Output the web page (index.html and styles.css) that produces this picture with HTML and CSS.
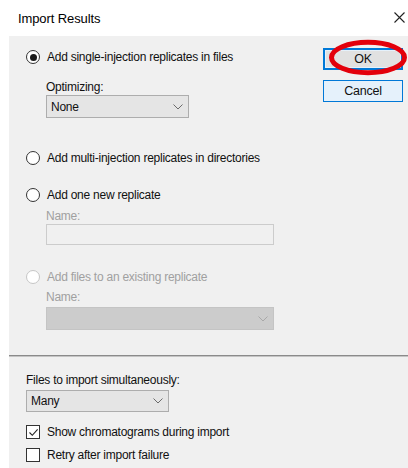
FILE: index.html
```html
<!DOCTYPE html>
<html lang="en">
<head>
<meta charset="utf-8">
<title>Import Results</title>
<link rel="stylesheet" href="styles.css">
</head>
<body>
<div class="dialog">
  <header class="titlebar">
    <span class="title">Import Results</span>
    <svg class="close" width="11" height="11" viewBox="0 0 11 11" aria-label="Close">
      <path d="M0.5 0.5 L10.5 10.5 M10.5 0.5 L0.5 10.5" stroke="#222" stroke-width="1.1" fill="none"/>
    </svg>
  </header>

  <main class="panel">
    <section class="top">
      <div class="options">
        <label class="radio-row r1"><span class="radio checked"></span>Add single-injection replicates in files</label>
        <div class="caption c-opt">Optimizing:</div>
        <div class="combo w-short"><span>None</span>
          <svg class="chev" width="10" height="6" viewBox="0 0 10 6"><path d="M0.5 0.5 L5 5 L9.5 0.5" fill="none" stroke="#6b6b6b" stroke-width="1"/></svg>
        </div>

        <label class="radio-row r2"><span class="radio"></span>Add multi-injection replicates in directories</label>

        <label class="radio-row r3"><span class="radio"></span>Add one new replicate</label>
        <div class="caption disabled c-name1">Name:</div>
        <div class="textbox"></div>

        <label class="radio-row r4 disabled"><span class="radio off"></span>Add files to an existing replicate</label>
        <div class="caption disabled c-name2">Name:</div>
        <div class="combo combo-off w-long">
          <svg class="chev" width="10" height="6" viewBox="0 0 10 6"><path d="M0.5 0.5 L5 5 L9.5 0.5" fill="none" stroke="#a8a8a8" stroke-width="1"/></svg>
        </div>
      </div>

      <div class="buttons">
        <button class="btn btn-default">OK</button>
        <button class="btn btn-hover">Cancel</button>
        <svg class="mark" width="80" height="36" viewBox="0 0 80 36">
          <ellipse cx="39" cy="17.5" rx="36.5" ry="15.2" fill="none" stroke="#e3000b" stroke-width="5"/>
        </svg>
      </div>
    </section>

    <div class="separator"></div>

    <section class="bottom">
      <div class="caption c-files">Files to import simultaneously:</div>
      <div class="combo w-short"><span>Many</span>
        <svg class="chev" width="10" height="6" viewBox="0 0 10 6"><path d="M0.5 0.5 L5 5 L9.5 0.5" fill="none" stroke="#6b6b6b" stroke-width="1"/></svg>
      </div>
      <label class="check-row k1"><span class="check">
        <svg width="11" height="11" viewBox="0 0 11 11"><path d="M1.5 5.5 L4.3 8.3 L9.6 2.3" fill="none" stroke="#222" stroke-width="1.1"/></svg>
      </span>Show chromatograms during import</label>
      <label class="check-row k2"><span class="check"></span>Retry after import failure</label>
    </section>
  </main>
</div>
</body>
</html>
```

FILE: styles.css
```css
* {
  box-sizing: border-box;
}

html, body {
  margin: 0;
  padding: 0;
  background: #ffffff;
}

body {
  width: 408px;
  height: 468px;
  overflow: hidden;
  font-family: "Liberation Sans", Arial, sans-serif;
  font-size: 12px;
  letter-spacing: -0.25px;
  color: #111111;
}

.dialog {
  display: flex;
  flex-direction: column;
  height: 100%;
}

/* window caption */
.titlebar {
  height: 36px;
  flex: none;
  display: flex;
  align-items: center;
  justify-content: space-between;
  padding: 0 3px 0 18px;
  background: #ffffff;
}

.title {
  font-size: 13px;
  letter-spacing: -0.1px;
  color: #000000;
  line-height: 16px;
  margin-top: 2px;
}

.close {
  display: block;
  margin-top: -1px;
}

/* client area */
.panel {
  flex: 1;
  margin-left: 9px;
  background: #f0f0f0;
  display: flex;
  flex-direction: column;
}

.top {
  display: flex;
  justify-content: space-between;
  align-items: flex-start;
}

.options {
  display: flex;
  flex-direction: column;
  align-items: flex-start;
  padding: 13px 0 25px 17px;
}

.radio-row,
.check-row {
  display: flex;
  align-items: center;
  height: 16px;
  line-height: 16px;
  white-space: nowrap;
}

.radio {
  width: 14px;
  height: 14px;
  border: 1px solid #333333;
  border-radius: 50%;
  background: #ffffff;
  margin-right: 7px;
  flex: none;
  position: relative;
}

.radio.checked::after {
  content: "";
  position: absolute;
  left: 2.5px;
  top: 2.5px;
  width: 7px;
  height: 7px;
  border-radius: 50%;
  background: #1a1a1a;
}

.radio.off {
  border-color: #c6c6c6;
}

.disabled {
  color: #a0a0a0;
}

.r2 { margin-top: 32px; }
.r3 { margin-top: 21px; }
.r4 { margin-top: 24px; }

.caption {
  height: 14px;
  line-height: 14px;
  white-space: nowrap;
}

.options .caption {
  margin-left: 20px;
}

.c-opt { margin-top: 15px; }
.c-name1 { margin-top: 6px; }
.c-name2 { margin-top: 5px; }

/* drop-down lists */
.combo {
  height: 23px;
  display: flex;
  align-items: center;
  justify-content: space-between;
  padding: 0 5px 0 4px;
  background: #e5e5e5;
  border: 1px solid #adadad;
  margin-top: 1px;
}

.options .combo,
.options .textbox {
  margin-left: 20px;
}

.combo span {
  line-height: 16px;
}

.chev {
  display: block;
  margin-left: auto;
}

.w-short { width: 143px; }
.w-long { width: 228px; }

.combo-off {
  background: #cccccc;
  border-color: #c4c4c4;
  margin-top: 3px;
}

.textbox {
  width: 228px;
  height: 21px;
  margin-top: 1px;
  background: #f0f0f0;
  border: 1px solid #cccccc;
}

/* command buttons */
.buttons {
  position: relative;
  display: flex;
  flex-direction: column;
  gap: 10px;
  padding-top: 12px;
  margin-right: 5px;
}

.btn {
  width: 80px;
  height: 22px;
  font-family: inherit;
  font-size: 12.5px;
  letter-spacing: -0.25px;
  color: #111111;
  padding: 0;
  border: 1px solid #0078d7;
  background: #e5f1fb;
}

.btn-default {
  border-width: 2px;
  background: #e1e1e1;
  box-shadow: inset 0 0 0 1px #e5f1fb;
}

.mark {
  position: absolute;
  left: 6px;
  top: 4px;
  overflow: visible;
  pointer-events: none;
}

.separator {
  height: 2px;
  border-top: 1px solid #8a8a8a;
  border-bottom: 1px solid #c4c4c4;
  flex: none;
}

.bottom {
  display: flex;
  flex-direction: column;
  align-items: flex-start;
  padding: 16px 0 0 17px;
}

.bottom .combo {
  height: 22px;
  margin-top: 3px;
}

.check {
  width: 14px;
  height: 14px;
  border: 1px solid #333333;
  background: #ffffff;
  margin-right: 7px;
  flex: none;
  display: flex;
  align-items: center;
  justify-content: center;
}

.check svg {
  display: block;
}

.k1 { margin-top: 12px; }
.k2 { margin-top: 7px; }
```
